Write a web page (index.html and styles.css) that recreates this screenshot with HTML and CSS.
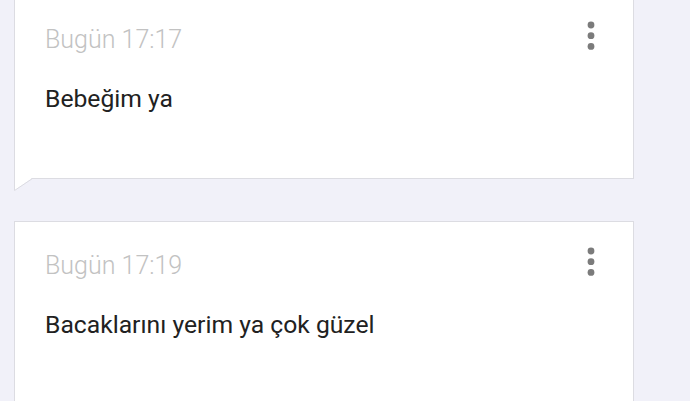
FILE: index.html
```html
<!DOCTYPE html>
<html lang="tr">

<head>
    <meta charset="UTF-8">
    <meta name="viewport" content="width=device-width, initial-scale=1.0">
    <title>Notlar</title>
    <link rel="stylesheet" href="styles.css">
</head>

<body>
    <div class="list">
        <!-- ilk not, balon kuyruklu -->
        <div class="note note-first">
            <div class="note-head">
                <span class="note-time">Bugün 17:17</span>
                <svg class="note-menu" width="8" height="30" viewBox="0 0 8 30">
                    <circle cx="4" cy="4" r="3.4"/>
                    <circle cx="4" cy="14.7" r="3.4"/>
                    <circle cx="4" cy="25.4" r="3.4"/>
                </svg>
            </div>
            <div class="note-text">Bebeğim ya</div>
            <svg class="note-tail" width="20" height="14" viewBox="0 0 20 14">
                <polygon points="0.5,0 0.5,12.5 18,0" fill="#fff"/>
                <polyline points="0.5,0 0.5,12.5 18.5,0.5" fill="none" stroke="#dcdce2" stroke-width="1"/>
            </svg>
        </div>

        <div class="note">
            <div class="note-head">
                <span class="note-time">Bugün 17:19</span>
                <svg class="note-menu" width="8" height="30" viewBox="0 0 8 30">
                    <circle cx="4" cy="4" r="3.4"/>
                    <circle cx="4" cy="14.7" r="3.4"/>
                    <circle cx="4" cy="25.4" r="3.4"/>
                </svg>
            </div>
            <div class="note-text">Bacaklarını yerim ya çok güzel</div>
        </div>
    </div>
</body>

</html>
```

FILE: styles.css
```css
body {
    margin: 0;
    background-color: #f1f1f9;
    font-family: Roboto, "Noto Sans", sans-serif;
    overflow: hidden;
}
.list {
    display: flex;
    flex-direction: column;
    gap: 42px;
    width: 620px;
    margin-left: 14px;
    margin-top: -5px;
}
.note {
    position: relative;
    background-color: #fff;
    border: 1px solid #dcdce2;
    padding: 29px 38px 64px 30px;
    height: 300px;
}
.note-first {
    height: auto;
}
.note-head {
    display: flex;
    justify-content: space-between;
    align-items: flex-start;
    height: 30px;
}
.note-time {
    font-size: 25px;
    line-height: 30px;
    font-weight: 300;
    color: #c2c2c2;
}
.note-menu {
    margin-top: -4px;
    fill: #7b7b7b;
}
.note-text {
    margin-top: 29px;
    font-size: 24.7px;
    line-height: 30px;
    color: #212121;
}
.note-tail {
    position: absolute;
    left: -1px;
    top: 100%;
}
```
